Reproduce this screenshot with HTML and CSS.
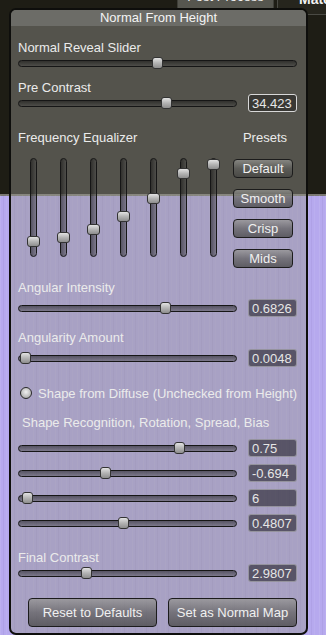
FILE: index.html
```html
<!DOCTYPE html>
<html lang="en">
<head>
    <meta charset="UTF-8">
    <meta name="viewport" content="width=device-width, initial-scale=1.0">
    <title>Normal From Height</title>
    <link rel="stylesheet" href="styles.css">
</head>
<body>

    <div class="tabs">
        <div class="tab tab-post">Post Process</div>
        <div class="tab tab-mat">Mate</div>
    </div>

    <div class="panel">
        <div class="panel-title">Normal From Height</div>
        <div class="panel-body">

            <div class="label">Normal Reveal Slider</div>
            <div class="row">
                <div class="track"><span class="thumb" style="--v:0.5"></span></div>
            </div>

            <div class="label mt-10">Pre Contrast</div>
            <div class="row">
                <div class="track"><span class="thumb" style="--v:0.689"></span></div>
                <div class="value focused">34.423</div>
            </div>

            <div class="eq-head">
                <span>Frequency Equalizer</span>
                <span class="presets-title">Presets</span>
            </div>
            <div class="eq">
                <div class="bands">
                    <div class="band"><div class="vtrack"><span class="vthumb" style="--v:0.9"></span></div></div>
                    <div class="band"><div class="vtrack"><span class="vthumb" style="--v:0.85"></span></div></div>
                    <div class="band"><div class="vtrack"><span class="vthumb" style="--v:0.76"></span></div></div>
                    <div class="band"><div class="vtrack"><span class="vthumb" style="--v:0.61"></span></div></div>
                    <div class="band"><div class="vtrack"><span class="vthumb" style="--v:0.4"></span></div></div>
                    <div class="band"><div class="vtrack"><span class="vthumb" style="--v:0.1"></span></div></div>
                    <div class="band"><div class="vtrack"><span class="vthumb" style="--v:0"></span></div></div>
                </div>
                <div class="presets">
                    <button class="btn preset">Default</button>
                    <button class="btn preset">Smooth</button>
                    <button class="btn preset">Crisp</button>
                    <button class="btn preset">Mids</button>
                </div>
            </div>

            <div class="label mt-13">Angular Intensity</div>
            <div class="row mt-5">
                <div class="track"><span class="thumb" style="--v:0.684"></span></div>
                <div class="value">0.6826</div>
            </div>

            <div class="label mt-15">Angularity Amount</div>
            <div class="row mt-5">
                <div class="track"><span class="thumb" style="--v:0.007"></span></div>
                <div class="value">0.0048</div>
            </div>

            <div class="check mt-19">
                <span class="radio"></span>
                <span>Shape from Diffuse (Unchecked from Height)</span>
            </div>

            <div class="label indent mt-15">Shape Recognition, Rotation, Spread, Bias</div>
            <div class="row mt-10">
                <div class="track"><span class="thumb" style="--v:0.751"></span></div>
                <div class="value">0.75</div>
            </div>
            <div class="row mt-9">
                <div class="track"><span class="thumb" style="--v:0.392"></span></div>
                <div class="value">-0.694</div>
            </div>
            <div class="row mt-9">
                <div class="track"><span class="thumb" style="--v:0.014"></span></div>
                <div class="value">6</div>
            </div>
            <div class="row mt-9">
                <div class="track"><span class="thumb" style="--v:0.483"></span></div>
                <div class="value">0.4807</div>
            </div>

            <div class="label mt-20">Final Contrast</div>
            <div class="row">
                <div class="track"><span class="thumb" style="--v:0.3"></span></div>
                <div class="value">2.9807</div>
            </div>

            <div class="actions">
                <button class="btn big">Reset to Defaults</button>
                <button class="btn big">Set as Normal Map</button>
            </div>

        </div>
    </div>

</body>
</html>
```

FILE: styles.css
```css
* {
    box-sizing: border-box;
}

body {
    margin: 0;
    width: 326px;
    height: 635px;
    overflow: hidden;
    position: relative;
    font-family: "Liberation Sans", Arial, sans-serif;
    font-size: 13px;
    color: #ebebeb;
    background:
        repeating-linear-gradient(90deg,
            rgba(255,255,255,0.08) 0 1px,
            rgba(0,0,0,0) 1px 3px,
            rgba(90,70,140,0.08) 3px 4px,
            rgba(0,0,0,0) 4px 6px,
            rgba(255,255,255,0.06) 6px 7px,
            rgba(0,0,0,0) 7px 11px) 0 195px / 100% 100% no-repeat,
        linear-gradient(#1e1d15 0 194px, #7a7872 194px 196px, #b6a9ee 196px);
}

/* tabs peeking out above the panel */
.tabs {
    position: absolute;
    top: -12px;
    left: 177px;
    display: flex;
    gap: 3px;
}

.tab {
    height: 27px;
    line-height: 16px;
    border: 1px solid #3e3e38;
    border-radius: 4px;
    color: #f2f2f2;
    white-space: nowrap;
    overflow: hidden;
}

.tab-post {
    width: 97px;
    background: #56564f;
    text-align: center;
}

.tab-mat {
    width: 60px;
    background: #26251d;
    border-color: #4a4a44;
    font-weight: bold;
    font-size: 14px;
    line-height: 20px;
    padding-left: 21px;
}

/* panel */
.panel {
    position: relative;
    z-index: 1;
    margin: 8px 0 0 9px;
    width: 299px;
    height: 627px;
    border: 2px solid #0e0e0c;
    border-radius: 7px;
    background: rgba(150, 150, 145, 0.45);
    overflow: hidden;
}

.panel-title {
    height: 16px;
    line-height: 16px;
    text-align: center;
    background: #6c6c67;
    color: #f4f4f4;
}

.panel-body {
    padding: 15px 9px 0 7px;
}

.label {
    height: 14px;
    line-height: 14px;
    white-space: nowrap;
}

.indent {
    padding-left: 4px;
}

.mt-5 { margin-top: 5px; }
.mt-9 { margin-top: 9px; }
.mt-10 { margin-top: 10px; }
.mt-13 { margin-top: 13px; }
.mt-15 { margin-top: 15px; }
.mt-19 { margin-top: 19px; }
.mt-20 { margin-top: 20px; }

/* horizontal sliders */
.row {
    height: 16px;
    display: flex;
    align-items: center;
    gap: 11px;
}

.track {
    flex: 1;
    position: relative;
    height: 7px;
    border: 1px solid #161616;
    border-radius: 4px;
    background: linear-gradient(rgba(20,20,20,0.55), rgba(70,70,70,0.45));
}

.thumb {
    position: absolute;
    top: -4px;
    left: calc(var(--v) * (100% - 11px));
    width: 11px;
    height: 12px;
    border: 1px solid #333;
    border-radius: 3px;
    background: linear-gradient(#e2e2e2, #b4b4b4 50%, #8e8e8e);
}

.value {
    width: 49px;
    height: 18px;
    flex-shrink: 0;
    padding-left: 3px;
    line-height: 17px;
    border: 1px solid rgba(225, 225, 225, 0.45);
    border-radius: 3px;
    background: rgba(22, 22, 28, 0.55);
    color: #e6e6e6;
}

.value.focused {
    border-color: #d8d8d8;
    background: rgba(30, 30, 28, 0.5);
}

/* equalizer */
.eq-head {
    margin-top: 20px;
    height: 14px;
    line-height: 14px;
    display: flex;
    justify-content: space-between;
}

.presets-title {
    width: 60px;
    margin-right: 2px;
    text-align: center;
}

.eq {
    margin-top: 13px;
    display: flex;
    gap: 5px;
}

.bands {
    display: flex;
}

.band {
    width: 30px;
    display: flex;
    justify-content: center;
}

.vtrack {
    position: relative;
    width: 7px;
    height: 99px;
    border: 1px solid #161616;
    border-radius: 4px;
    background: linear-gradient(90deg, rgba(20,20,20,0.55), rgba(70,70,70,0.45));
}

.vthumb {
    position: absolute;
    left: -4px;
    top: calc(var(--v) * (100% - 11px));
    width: 13px;
    height: 11px;
    border: 1px solid #333;
    border-radius: 3px;
    background: linear-gradient(#e2e2e2, #b4b4b4 50%, #8e8e8e);
}

.presets {
    margin-top: 1px;
    display: flex;
    flex-direction: column;
    gap: 11px;
}

.btn {
    font-family: "Liberation Sans", Arial, sans-serif;
    font-size: 13px;
    color: #f0f0f0;
    border: 1px solid #1c1c1c;
    border-radius: 4px;
    background: linear-gradient(rgba(150,150,146,0.75), rgba(95,95,92,0.7) 50%, rgba(70,70,68,0.75));
    padding: 0;
    cursor: pointer;
}

.preset {
    width: 60px;
    height: 19px;
    line-height: 17px;
}

/* checkbox line */
.check {
    height: 16px;
    display: flex;
    align-items: center;
    gap: 6px;
    padding-left: 2px;
    white-space: nowrap;
}

.radio {
    width: 12px;
    height: 12px;
    flex-shrink: 0;
    border: 1px solid #2a2a2a;
    border-radius: 50%;
    background: radial-gradient(circle at 50% 40%, #f0f0f0, #bdbdbd 60%, #8a8a8a);
}

/* bottom buttons */
.actions {
    margin-top: 17px;
    display: flex;
    justify-content: flex-end;
    gap: 11px;
}

.big {
    width: 129px;
    height: 29px;
}
```
